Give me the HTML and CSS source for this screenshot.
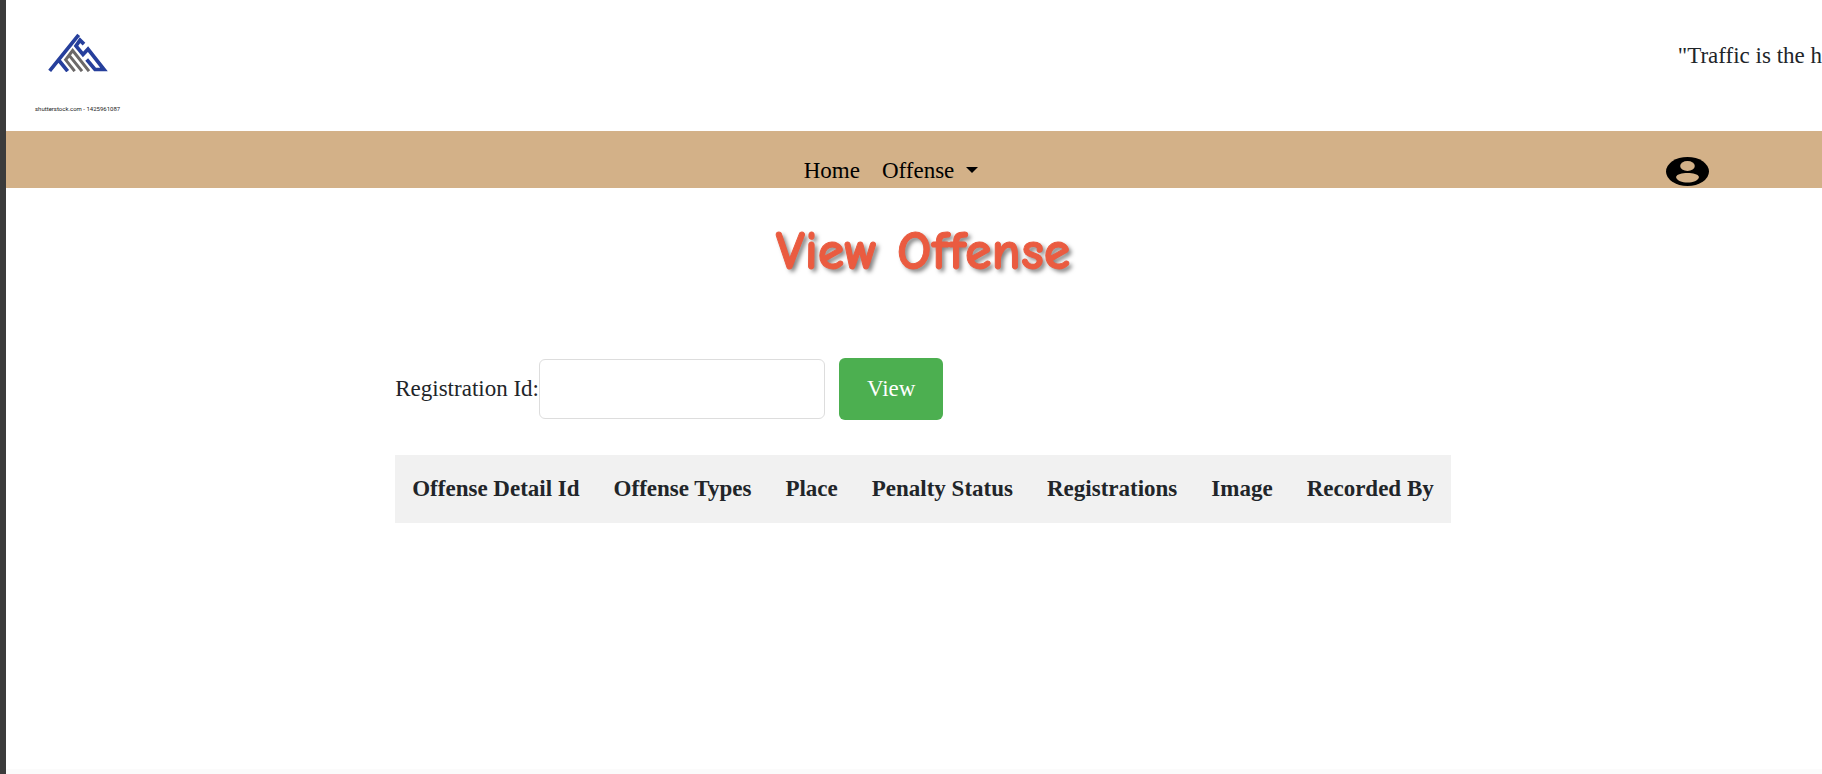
FILE: index.html
```html
<!DOCTYPE html>
<html lang="en">
<head>
<meta charset="utf-8">
<title>View Offense</title>
<link rel="stylesheet" href="styles.css">
</head>
<body>
<div class="page">
  <header class="header">
    <div class="brand">
      <svg class="logo" viewBox="144 98 180 116" fill="none" stroke-width="11" role="img" aria-label="TMS">
        <g stroke="#263f9c">
          <path d="M149 211 L236 103 M177 180 L203 212"/>
          <path d="M252 131 L240 119 L228 136 L249 162 L264 146 L312 207 H285 L260 177"/>
        </g>
        <path stroke="#6b6868" stroke-width="9" d="M224 212 L197 178 L218 150 L267 212 M207 164 L246 212"/>
      </svg>
      <span class="caption">shutterstock.com - 1425961087</span>
    </div>
    <p class="ticker">"Traffic is the h</p>
  </header>
  <nav class="nav">
    <div class="menu">
      <a class="link" href="#">Home</a>
      <a class="link" href="#">Offense<span class="caret"></span></a>
    </div>
    <button class="profile" type="button" aria-label="Profile">
      <svg class="avatar" viewBox="0 0 43 29">
        <ellipse cx="21.5" cy="14.5" rx="21.5" ry="14.5" fill="#000"/>
        <ellipse cx="21.5" cy="9" rx="7.3" ry="5" fill="#d3b188"/>
        <path d="M10 20 C11 17 16 16 21.5 16 S32 17 33 20 C32 24 27 25.500 21.500 25.500 S11 24 10 20Z" fill="#d3b188"/>
      </svg>
    </button>
  </nav>
  <main class="main">
    <h1 class="title">View Offense</h1>
    <div class="content">
      <form class="form">
        <label for="registration">Registration Id:</label>
        <input class="field" id="registration" type="text">
        <button class="submit" type="button">View</button>
      </form>
      <table class="table">
        <thead>
          <tr><th>Offense Detail Id</th><th>Offense Types</th><th>Place</th><th>Penalty Status</th><th>Registrations</th><th>Image</th><th>Recorded By</th></tr>
        </thead>
      </table>
    </div>
  </main>
  <footer class="footer"></footer>
</div>
</body>
</html>
```
FILE: styles.css
```css
* { box-sizing: border-box; }
body {
  margin: 0;
  background: #fff;
  color: #212529;
  font: 23px/34px "Liberation Serif", "Times New Roman", serif;
}
.page {
  display: flex;
  flex-direction: column;
  min-height: 100vh;
  border-left: 6px solid #3b3b3b;
  overflow: hidden;
}
.header {
  display: flex;
  justify-content: space-between;
  padding: 33px 0 16px 29px;
}
.brand {
  display: flex;
  flex-direction: column;
  justify-content: space-between;
  align-items: center;
  height: 82px;
}
.logo { width: 60px; height: 39px; }
.caption { font: 6px/12px Roboto, sans-serif; color: #222; }
.ticker { margin: 6px 0 0; white-space: nowrap; }
.nav {
  display: grid;
  grid-template-columns: 1fr auto 1fr;
  align-items: end;
  padding: 23px 52px 0 6px;
  background: #d3b188;
}
.menu { display: flex; gap: 22px; grid-column: 2; }
.link { color: #000; text-decoration: none; }
.caret {
  display: inline-block;
  margin-left: 12px;
  vertical-align: 5px;
  border: 6px solid transparent;
  border-top-color: #000;
  border-bottom: 0;
}
.profile {
  justify-self: end;
  margin: 0 61px 2px 0;
  padding: 0;
  border: 0;
  background: none;
}
.avatar { display: block; width: 43px; height: 29px; }
.main {
  display: flex;
  flex: 1;
  flex-direction: column;
  align-items: center;
  padding: 32px 0 32px 18px;
}
.title {
  margin: 0 0 74px;
  color: #ea5b40;
  font: 700 54px/64px "Comic Sans MS", "Comic Neue", Lato, sans-serif;
  text-shadow: 3px 3px 4px rgba(0, 0, 0, 0.5);
  -webkit-text-stroke: 1px #ea5b40;
}
.form { display: flex; align-items: center; margin-bottom: 35px; }
.field {
  width: 286px;
  height: 60px;
  padding: 12px;
  border: 1px solid #ddd;
  border-radius: 6px;
  font: inherit;
}
.submit {
  margin-left: 14px;
  padding: 14px 28px;
  border: 0;
  border-radius: 6px;
  background: #4caf50;
  color: #fff;
  font: inherit;
}
.table { border-collapse: collapse; background: #f1f1f1; }
.table th { padding: 17px; white-space: nowrap; }
.footer { height: 5px; background: #fbfbfb; }
```
